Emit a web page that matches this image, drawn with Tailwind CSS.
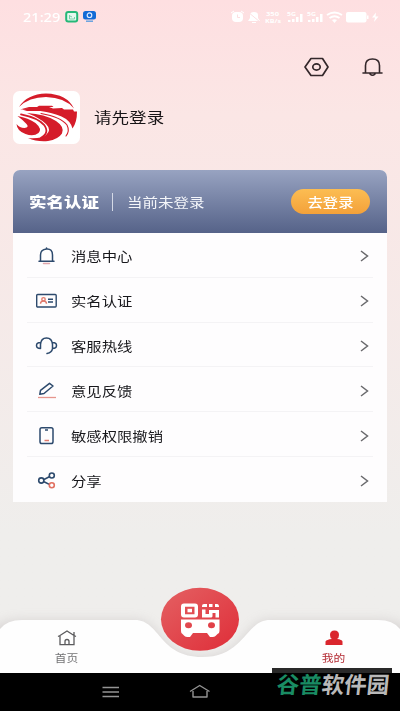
<!DOCTYPE html>
<html lang="zh-CN">
<head>
<meta charset="utf-8">
<meta name="viewport" content="width=device-width, initial-scale=1">
<title>我的</title>
<script src="https://cdn.jsdelivr.net/npm/@tailwindcss/browser@4"></script>
</head>
<body class="font-['Liberation_Sans','Noto_Sans_CJK_SC',sans-serif]">
<div class="flex h-[711px] w-[400px] flex-col overflow-hidden bg-linear-to-b from-[#fedfe1] from-0% via-[#fbe6e5] via-16% to-[#efeeec] to-75%">

  <!-- status bar -->
  <header class="flex h-[34px] shrink-0 items-center pl-[23px] pr-[20px] text-white">
    <span class="w-[42px] whitespace-nowrap text-[13px] leading-none"><span class="inline-block origin-left scale-x-112 font-['Noto_Sans'] font-medium">21:29</span></span>
    <svg class="h-[12px] w-[32px]" viewBox="0 0 32 12">
      <rect x="1.2" y="1" width="11" height="9.6" rx="2" fill="#e4f8ee" stroke="#25b878" stroke-width="2"/>
      <path d="M4.500 4v4h5V6M5 5l2 1" fill="none" stroke="#79cfaa"/>
      <rect x="18" y="0" width="13" height="8.600" rx="2.500" fill="#126bd6"/>
      <circle cx="24.500" cy="4.200" r="2.300" fill="none" stroke="#dceaff" stroke-width="1.200"/>
      <path d="M21 10.200h7" stroke="#5d9ddf" stroke-width="1.400"/>
    </svg>
    <svg class="ml-auto h-[14px] w-[149px]" viewBox="0 0 149 14" fill="#fff">
      <rect x="1" y="2" width="11" height="10" rx="4"/><path d="M0 3l3-2M13 3l-3-2" stroke="#fff"/><path d="M6.500 4.500v3h2.500" fill="none" stroke="#fddfe1"/>
      <path d="M17 11l2-3V5q0-3 4-3t4 3v3l2 3zM21 12h4v1h-4z"/><path d="M17 2l12 10" stroke="#fddfe1"/>
      <g font-family="Noto Sans" font-size="6" font-weight="700"><text x="35" y="6" textLength="13" lengthAdjust="spacingAndGlyphs">350</text><text x="34" y="12.500" textLength="16" lengthAdjust="spacingAndGlyphs">KB/s</text><text x="56" y="6" textLength="9" lengthAdjust="spacingAndGlyphs">5G</text><text x="76" y="6" textLength="9" lengthAdjust="spacingAndGlyphs">5G</text></g>
      <path d="M57 10h2.500v2H57zM61 9h2.500v3H61zM65 7h2.500v5H65zM69 4h2.500v8H69zM77 10h2.500v2H77zM81 9h2.500v3H81zM85 7h2.500v5H85zM89 4h2.500v8H89z"/>
      <path d="M96 5q7.500-5 15 0M98.500 8q5-3.500 10 0" fill="none" stroke="#fff" stroke-width="1.800"/><path d="M101 10q2.500-1.500 5 0l-2.500 3z"/>
      <rect x="115" y="2" width="20.500" height="10.500" rx="2"/><path d="M136 5.500h1.500v3.500H136zM145 2.500l-4 5h3l-1 4.500 4.500-5.500h-3z"/>
    </svg>
  </header>

  <!-- page actions -->
  <div class="flex h-[57px] shrink-0 items-start justify-end gap-[33px] pr-[17px] pt-[23px]">
    <svg class="h-[20px] w-[25px]" viewBox="0 0 25 20" fill="none" stroke="#33272a" stroke-width="1.700" stroke-linejoin="round"><path d="M7 1.500h11.500L24 10l-5.500 8.500H7L1 10z"/><ellipse cx="12.500" cy="10" rx="3.700" ry="3.100"/></svg>
    <svg class="h-[20px] w-[21px]" viewBox="0 0 21 20" fill="none" stroke="#33272a" stroke-width="1.600" stroke-linecap="round" stroke-linejoin="round"><path d="M1 16h19M3.500 15.500V8.500q0-6.500 7-6.500t7 6.500v7M8 17q2.500 2.500 5 0"/></svg>
  </div>

  <!-- profile -->
  <section class="flex h-[53px] shrink-0 items-center pl-[13px]">
    <svg class="h-[53px] w-[67px]" viewBox="0 0 67 53">
      <rect width="67" height="53" rx="6.500" fill="#fff"/>
      <g fill="#d51c2a">
        <path d="M6 16Q14 3 33 2.500 54 3 61 17.500 52 6.500 33 6 16 6 6 16z"/>
        <path d="M7 18.500l9-2.500h8l2-1.300h13l1.500 1.300H36l4 1.500 9-.500 2 1.500h9l1 2h3q0 11-4.500 17-2-8-11-12-9-4-21-5.500H14l-5-1.500 8-1z"/>
        <path d="M14 22q18 1 29 8 9 6 6 12.500-4 6-14 7.500-11 1-20-3 13 1 18-3 6-5 0-11-6-6-19-11z"/>
        <path d="M4.500 25q11 2 18 7 7 6 3 10-5 4-13 1Q4 40 3.500 33q3 4 8 4 5-.500 2-4-3-3.500-9-8z"/>
      </g>
      <g fill="none" stroke="#d51c2a" stroke-linecap="round">
        <path d="M8 23.300q17 3.500 23 10.500 6 8-3 13" stroke-width="1.800"/>
        <path d="M28 22.500q20 3.500 26 11.500 3 6-1 11" stroke-width="1.100"/>
      </g>
    </svg>
    <h1 class="ml-[13.500px] mt-[1px] origin-left scale-x-121 whitespace-nowrap text-[14.500px] leading-none text-[#171416]">请先登录</h1>
  </section>

  <!-- account card -->
  <main class="mx-[13px] mt-[26px] shrink-0 overflow-hidden rounded-t-[7px] bg-[#fefdfe]">
    <div class="flex h-[63px] items-center bg-linear-to-b from-[#98a3c1] to-[#566389] pl-[16px] pr-[17px] text-white">
      <span class="w-[83px] whitespace-nowrap"><b class="inline-block origin-left scale-x-125 text-[14px] font-black leading-none">实名认证</b></span>
      <span class="h-[18px] w-px bg-[#d4d9e6]"></span>
      <span class="ml-[13.500px] mt-[1px] inline-block origin-left scale-x-119 whitespace-nowrap text-[13px] leading-none text-[#f4f6fa]">当前未登录</span>
      <button class="ml-auto flex h-[25px] w-[79px] items-center justify-center rounded-full bg-linear-to-b from-[#fcbd52] to-[#f3a13a]"><span class="mt-px scale-x-118 whitespace-nowrap text-[13px] font-medium leading-none">去登录</span></button>
    </div>
    <ul class="px-[14px] text-[13px] leading-none text-[#18181c]">
      <li class="flex h-[44.800px] items-center border-b border-[#f4f3f5] pl-[8px] pr-[4px] pt-[2px]">
        <svg class="h-[20px] w-[23px]" viewBox="0 0 23 20" fill="none" stroke="#2d4a6d" stroke-width="1.500" stroke-linecap="round" stroke-linejoin="round"><path d="M4 15.300h15M5.500 15V9q0-5.500 6-6t6 6v6M11.500 3V2"/><path d="M8.500 17.500h6" stroke="#e0a6ab"/></svg>
        <span class="ml-[13px] mt-px origin-left scale-x-118 whitespace-nowrap">消息中心</span>
        <svg class="ml-auto h-[12px] w-[9px]" viewBox="0 0 9 12" fill="none" stroke="#69696c" stroke-width="1.500"><path d="M1 1l6.500 5L1 11"/></svg>
      </li>
      <li class="flex h-[44.800px] items-center border-b border-[#f4f3f5] pl-[8px] pr-[4px] pt-[2px]">
        <svg class="h-[20px] w-[23px]" viewBox="0 0 23 20" fill="none" stroke="#2d4a6d" stroke-width="1.400"><rect x="1.700" y="3.500" width="19.500" height="12.500" rx="1"/><path d="M13 8.200h5M13 11h5"/><path d="M5.500 12.800q0-2.800 3-2.800t3 2.800" stroke="#e17b6d"/><circle cx="8.500" cy="8.300" r="1.700" stroke="#e17b6d"/></svg>
        <span class="ml-[13px] mt-px origin-left scale-x-118 whitespace-nowrap">实名认证</span>
        <svg class="ml-auto h-[12px] w-[9px]" viewBox="0 0 9 12" fill="none" stroke="#69696c" stroke-width="1.500"><path d="M1 1l6.500 5L1 11"/></svg>
      </li>
      <li class="flex h-[44.800px] items-center border-b border-[#f4f3f5] pl-[8px] pr-[4px] pt-[3px]">
        <svg class="h-[20px] w-[23px]" viewBox="0 0 23 20" fill="none" stroke="#2d4a6d" stroke-width="1.500" stroke-linecap="round"><path d="M5.500 12.500V8.500Q6 2 11.500 2t6 6.500v4q-.500 4-5.500 5M5.500 6.500Q1.500 6.500 1.500 9.500t4 3M17.500 6.500q4 0 4 3t-4 3"/></svg>
        <span class="ml-[13px] mt-px origin-left scale-x-118 whitespace-nowrap">客服热线</span>
        <svg class="ml-auto h-[12px] w-[9px]" viewBox="0 0 9 12" fill="none" stroke="#69696c" stroke-width="1.500"><path d="M1 1l6.500 5L1 11"/></svg>
      </li>
      <li class="flex h-[44.800px] items-center border-b border-[#f4f3f5] pl-[8px] pr-[4px] pt-[3px]">
        <svg class="h-[20px] w-[23px]" viewBox="0 0 23 20" fill="none" stroke="#2d4a6d" stroke-width="1.500" stroke-linejoin="round"><path d="M4.800 13.300l.700-4L14.500 2.300l3.500 2.700L9 12.500z"/><path d="M3 16.500h18" stroke="#e6968d" stroke-width="1.300"/></svg>
        <span class="ml-[13px] mt-px origin-left scale-x-118 whitespace-nowrap">意见反馈</span>
        <svg class="ml-auto h-[12px] w-[9px]" viewBox="0 0 9 12" fill="none" stroke="#69696c" stroke-width="1.500"><path d="M1 1l6.500 5L1 11"/></svg>
      </li>
      <li class="flex h-[44.800px] items-center border-b border-[#f4f3f5] pl-[8px] pr-[4px] pt-[3px]">
        <svg class="h-[20px] w-[23px]" viewBox="0 0 23 20" fill="none" stroke="#2d4a6d" stroke-width="1.500"><rect x="5" y="1.700" width="13" height="15.800" rx="1.800"/><path d="M10 4h3"/><path d="M9.500 14.500h4.500" stroke="#e17b6d"/></svg>
        <span class="ml-[13px] mt-px origin-left scale-x-118 whitespace-nowrap">敏感权限撤销</span>
        <svg class="ml-auto h-[12px] w-[9px]" viewBox="0 0 9 12" fill="none" stroke="#69696c" stroke-width="1.500"><path d="M1 1l6.500 5L1 11"/></svg>
      </li>
      <li class="flex h-[44.800px] items-center pl-[8px] pr-[4px] pt-[3px]">
        <svg class="h-[20px] w-[23px]" viewBox="0 0 23 20" fill="none" stroke="#2d4a6d" stroke-width="1.600"><circle cx="6.300" cy="9.500" r="2.600"/><circle cx="16.800" cy="4.500" r="2.500"/><path d="M9 8.500l5.300-2.700M9 10.700l5.300 2.700"/><circle cx="16.800" cy="14.300" r="2.500" stroke="#e17060"/></svg>
        <span class="ml-[13px] mt-px origin-left scale-x-118 whitespace-nowrap">分享</span>
        <svg class="ml-auto h-[12px] w-[9px]" viewBox="0 0 9 12" fill="none" stroke="#69696c" stroke-width="1.500"><path d="M1 1l6.500 5L1 11"/></svg>
      </li>
    </ul>
  </main>

  <!-- tab bar -->
  <footer class="relative mt-auto h-[131px] shrink-0">
    <svg class="absolute inset-0 h-[131px] w-[400px]" viewBox="0 0 400 131">
      <defs>
        <linearGradient id="red" x1="0" y1="0" x2="1" y2="1"><stop stop-color="#e46163"/><stop offset="1" stop-color="#df2d38"/></linearGradient>
        <filter id="soft" x="-10%" y="-40%" width="120%" height="180%"><feGaussianBlur stdDeviation="6"/></filter>
      </defs>
      <path d="M-10 100V50Q3 40 20 40h115c27 0 22 37 67 37s42-37 67-37h111q18 0 30 10v50z" fill="#9b9294" opacity=".28" filter="url(#soft)"/>
      <path d="M0 93V49q7-9 22-9h113c25 0 24 37 67 37s43-37 68-37h108q15 0 22 9v44z" fill="#fefefe"/>
      <ellipse cx="200" cy="39.300" rx="39" ry="31.500" fill="url(#red)"/>
      <g fill="#fff">
        <path fill-rule="evenodd" d="M184 23.500h11q3 0 3 3v8q0 3-3 3h-11q-3 0-3-3v-8q0-3 3-3zm1 3.300v7.500h9.500v-7.500z"/><rect x="187.500" y="28.800" width="4.500" height="3.500"/>
        <path fill-rule="evenodd" d="M181 39.500h38.500V51q0 2.500-2 3l-2 2q-1 1-3 1h-2.500l-3-4h-14l-3 4h-2.500q-2 0-3-1l-2-2q-1.500-.500-1.500-3zm7.500 2.700a3.500 3 0 1 0 .01 6 3.500 3 0 1 0-.01-6zm23 0a3.500 3 0 1 0 .01 6 3.500 3 0 1 0-.01-6z"/>
        <path d="M204 24h3v3h-5v-1q0-2 2-2zM209 24h3.500v3H209zM215 24h2q2 0 2 3h-4zM202 29.500h3.500v4.500h3.500v-4h10v7.500h-3.500V33h-3v3.500l-1 1H202z"/>
      </g>
    </svg>
    <nav class="relative flex h-[93px] pt-[49px] text-[10.500px] leading-none">
      <a class="flex w-[133px] flex-col items-center gap-[7px] text-[#747476]">
        <svg class="h-[17px] w-[20px]" viewBox="0 0 20 17" fill="none" stroke="#5b5b5d" stroke-width="1.300"><path d="M1 7.500l2-1L10 2l7 4.500 2 1M3 6.500v9.200h14V6.500V3M8 15.500v-3q0-2 2-2t2 2v3"/></svg>
        <span class="scale-x-112">首页</span>
      </a>
      <a class="ml-auto flex w-[133px] flex-col items-center gap-[7px] text-[#b32a32]">
        <svg class="h-[17px] w-[20px]" viewBox="0 0 20 17" fill="#da262d"><path d="M6 6q0-4.500 4.500-4.500T15 6q0 3-2 4 5 .500 5.500 2.500V16h-17v-3.500Q2.500 10.500 8 10 6 9 6 6z"/></svg>
        <span class="scale-x-112 whitespace-nowrap">我的</span>
      </a>
    </nav>
    <div class="relative flex h-[38px] bg-black">
      <svg class="h-[38px] w-[272px]" viewBox="0 0 272 38" fill="none" stroke="#949494" stroke-width="1.400"><path d="M102.500 14.500H119M102.500 19H119M102.500 23.500H119"/><path d="M190 18.500L199.700 12.500 209.500 18.500M193 18v6h14v-6" stroke-linejoin="round"/></svg>
    </div>
    <div class="absolute left-[272px] top-[88px] flex h-[43px] w-[120px] justify-center bg-linear-to-b from-[#292929] from-[5px] to-black to-[5px] pt-[7px]">
      <b class="-skew-x-6 whitespace-nowrap text-[22.500px] font-bold leading-none text-[#b9b9b9]"><span class="text-[#198b63]">谷普</span>软件园</b>
    </div>
  </footer>
</div>
</body>
</html>
